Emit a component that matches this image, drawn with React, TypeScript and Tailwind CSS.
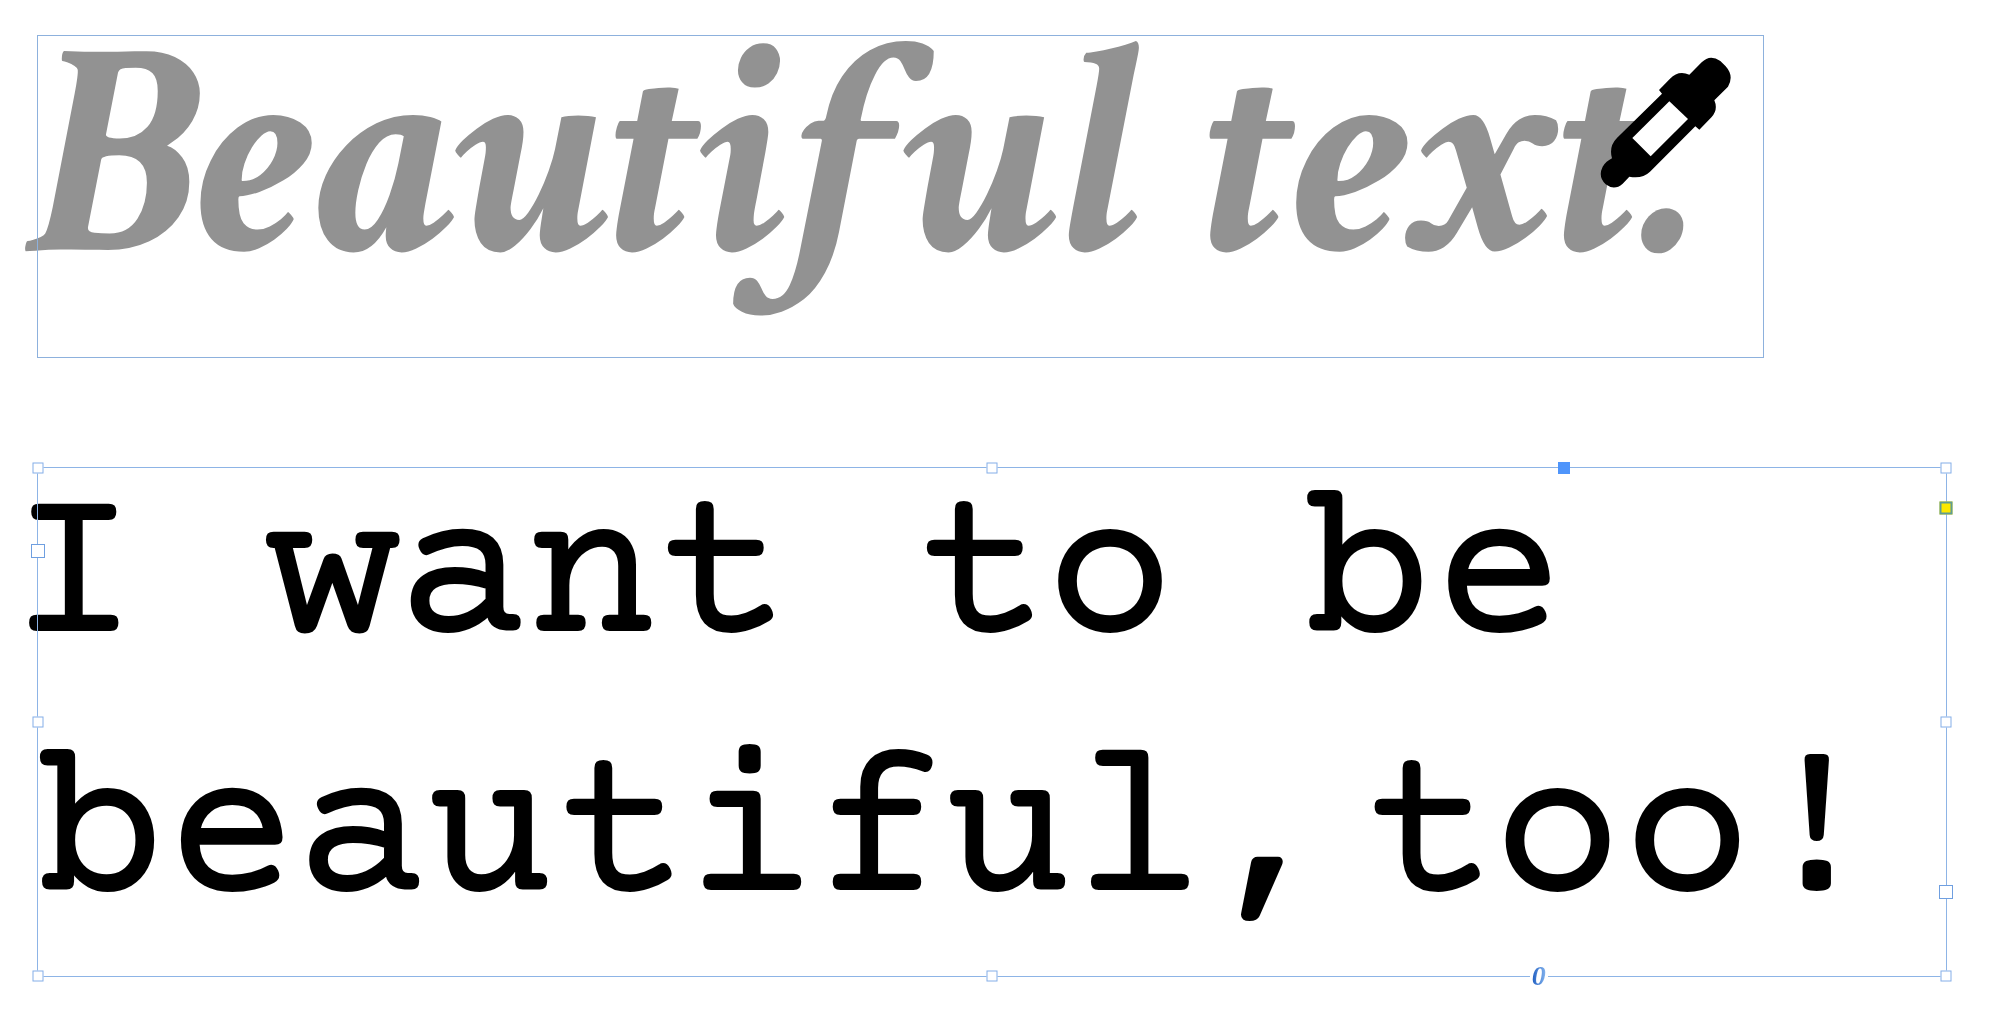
const handle =
  "absolute size-[11px] -translate-x-1/2 -translate-y-1/2 border border-[#84aee8] bg-white";
const port =
  "absolute size-[14px] -translate-x-1/2 -translate-y-1/2 border border-[#6f9fe0] bg-white";

function Eyedropper() {
  return (
    <svg
      viewBox="120 108 396 396"
      className="absolute top-[21px] right-8 size-[132px]"
      aria-hidden="true"
    >
      <path
        fill="#000"
        d="M297 210 L330 176 Q355 150 388 164 L425 127 Q450 101 481 123 L497 139 Q523 168 504 200 L463 241 Q475 269 455 291 L418 329 L406 319 L270 455 Q246 478 208 470 L188 491 Q163 513 137 493 Q113 470 128 440 Q138 424 156 415 Q146 380 170 355 L306 221 Z"
      />
      <path fill="#fff" d="M328 244 L384 297 L272 409 L217 354 Z" />
    </svg>
  );
}

function StyledFrame() {
  return (
    <section className="relative mr-[183px] pb-[76px]">
      <h1 className="-indent-[8px] whitespace-nowrap font-['Crimson_Text','Liberation_Serif',serif] text-[308px] leading-[247px] font-bold italic text-[#929292]">
        Beautiful text.
      </h1>
      <div className="pointer-events-none absolute inset-0 border border-[#8db1dd]" />
      <Eyedropper />
    </section>
  );
}

function SelectedFrame() {
  return (
    <section className="relative flex flex-col pb-1.5">
      <p className="-mt-3.5 -indent-[28px] whitespace-nowrap font-['Courier_Prime','Liberation_Mono',monospace] text-[216px] leading-[259px] text-black [-webkit-text-stroke:2px_black]">
        I want to be
        <br />
        beautiful,<span className="text-[52px] leading-none"> </span>too!
      </p>
      <div className="pointer-events-none absolute inset-0 border border-[#8db4e6]" />
      <div className="absolute inset-x-0 inset-y-0 m-px">
        <button aria-label="Resize top left" className={`${handle} top-0 left-0`} />
        <button aria-label="Resize top" className={`${handle} top-0 left-1/2`} />
        <button
          aria-label="Anchor frame"
          className="absolute top-0 left-[80%] size-3 -translate-x-1/2 -translate-y-1/2 bg-[#4f95fb]"
        />
        <button aria-label="Resize top right" className={`${handle} top-0 left-full`} />
        <button aria-label="Resize left" className={`${handle} top-1/2 left-0`} />
        <button aria-label="Resize right" className={`${handle} top-1/2 left-full`} />
        <button aria-label="Resize bottom left" className={`${handle} top-full left-0`} />
        <button aria-label="Resize bottom" className={`${handle} top-full left-1/2`} />
        <button aria-label="Resize bottom right" className={`${handle} top-full left-full`} />
        <button aria-label="Text in port" className={`${port} top-[83px] left-0`} />
        <button aria-label="Text out port" className={`${port} top-[424px] left-full`} />
        <button
          aria-label="Edit corners"
          className="absolute top-10 left-full size-[13px] -translate-x-1/2 -translate-y-1/2 border-2 border-[#5f9c94] bg-[#fbe800]"
        />
        <span className="absolute top-full left-[78.65%] flex h-6 w-[18px] -translate-x-1/2 -translate-y-1/2 items-center justify-center bg-white">
          <span className="bg-linear-to-r from-[#1456bd] to-[#8ebcf2] bg-clip-text px-px font-['Liberation_Serif',serif] text-[28px] leading-7 font-bold italic text-transparent">
            0
          </span>
        </span>
      </div>
    </section>
  );
}

export default function App() {
  return (
    <main className="flex min-h-screen flex-col gap-[109px] overflow-hidden bg-white pt-[35px] pr-[53px] pl-[37px]">
      <StyledFrame />
      <SelectedFrame />
    </main>
  );
}
